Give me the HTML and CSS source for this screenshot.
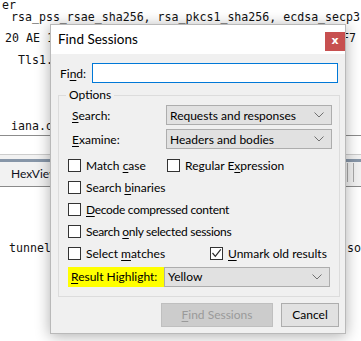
FILE: index.html
```html
<!DOCTYPE html>
<html lang="en">
<head>
  <meta charset="UTF-8">
  <title>Find Sessions</title>
  <link rel="stylesheet" href="styles.css">
</head>
<body>
  <div class="backdrop">
    <div class="code">
      <div class="ln ln-er">er</div>
      <div class="ln ln-rsa">rsa_pss_rsae_sha256, rsa_pkcs1_sha256, ecdsa_secp3</div>
      <div class="ln ln-hex"><span>20 AE 1C</span><span>F7</span></div>
      <div class="ln ln-tls">Tls1.2</div>
      <div class="ln ln-iana">iana.org</div>
    </div>
    <div class="tabs">
      <div class="tabstrip">
        <span class="tab">HexView</span>
        <span class="tab-edge"></span>
      </div>
    </div>
    <div class="ln ln-tunnel"><span>tunnel</span><span>so</span></div>
  </div>

  <div class="dialog">
    <div class="titlebar">
      <span class="title">Find Sessions</span>
      <span class="close">x</span>
    </div>

    <div class="find-row">
      <label>Fi<u>n</u>d:</label>
      <div class="textbox"></div>
    </div>

    <fieldset class="options">
      <legend>Options</legend>

      <div class="field-row">
        <label><u>S</u>earch:</label>
        <div class="select">
          <span>Requests and responses</span>
          <svg width="10" height="6" viewBox="0 0 10 6"><polyline points="0.5,0.5 5,5 9.5,0.5" fill="none" stroke="#707070" stroke-width="1"/></svg>
        </div>
      </div>
      <div class="field-row">
        <label><u>E</u>xamine:</label>
        <div class="select">
          <span>Headers and bodies</span>
          <svg width="10" height="6" viewBox="0 0 10 6"><polyline points="0.5,0.5 5,5 9.5,0.5" fill="none" stroke="#707070" stroke-width="1"/></svg>
        </div>
      </div>

      <div class="checks">
        <div class="check-row">
          <div class="check col-a"><span class="box"></span><span>Match <u>c</u>ase</span></div>
          <div class="check"><span class="box"></span><span>Regular E<u>x</u>pression</span></div>
        </div>
        <div class="check-row">
          <div class="check"><span class="box"></span><span>Search <u>b</u>inaries</span></div>
        </div>
        <div class="check-row">
          <div class="check tight"><span class="box"></span><span><u>D</u>ecode compressed content</span></div>
        </div>
        <div class="check-row">
          <div class="check tight"><span class="box"></span><span>Search <u>o</u>nly selected sessions</span></div>
        </div>
        <div class="check-row">
          <div class="check col-b"><span class="box"></span><span>Select <u>m</u>atches</span></div>
          <div class="check">
            <span class="box">
              <svg width="11" height="11" viewBox="0 0 11 11"><polyline points="1.5,5 4.3,8.3 9.8,1.3" fill="none" stroke="#2b2b2b" stroke-width="1.2"/></svg>
            </span>
            <span><u>U</u>nmark old results</span>
          </div>
        </div>
      </div>

      <div class="highlight-row">
        <label class="highlight"><u>R</u>esult Highlight:</label>
        <div class="select">
          <span>Yellow</span>
          <svg width="10" height="6" viewBox="0 0 10 6"><polyline points="0.5,0.5 5,5 9.5,0.5" fill="none" stroke="#707070" stroke-width="1"/></svg>
        </div>
      </div>
    </fieldset>

    <div class="buttons">
      <button class="btn btn-find" disabled><u>F</u>ind Sessions</button>
      <button class="btn btn-cancel">Cancel</button>
    </div>
  </div>
</body>
</html>
```

FILE: styles.css
```css
* {
  box-sizing: border-box;
  margin: 0;
  padding: 0;
}

body {
  width: 361px;
  height: 341px;
  overflow: hidden;
  position: relative;
  background: #fff;
  color: #000;
}

/* background window */

.ln {
  font-family: "DejaVu Sans Mono", monospace;
  font-size: 11.6px;
  line-height: 12px;
  height: 12px;
  white-space: pre;
  overflow-x: clip;
  color: #111;
}

.code {
  margin-top: -1px;
}

.ln-er {
  padding-left: 2px;
}

.ln-rsa {
  padding-left: 11px;
}

.ln-hex {
  display: flex;
  justify-content: space-between;
  margin-top: 9px;
  padding-left: 5px;
  padding-right: 5px;
}

.ln-tls {
  margin-top: 10px;
  padding-left: 18px;
}

.ln-iana {
  margin-top: 54px;
  padding-left: 11px;
  height: 16px;
  border-bottom: 1px solid #8c8c8c;
}

.tabs {
  margin-top: 18px;
  height: 33px;
  background: #f2f2f2;
  border-top: 1px solid #cdcdcd;
  border-bottom: 1px solid #8a8a8a;
}

.tabstrip {
  display: flex;
  align-items: center;
  margin-top: 4px;
  height: 27px;
  border-top: 3px solid #8796a8;
}

.tab {
  font-family: Lato, "Liberation Sans", sans-serif;
  font-size: 12px;
  color: #101020;
  padding-left: 11px;
  margin-top: -2px;
}

.tab-edge {
  margin-left: auto;
  margin-right: 7px;
  width: 7px;
  height: 19px;
  margin-top: -4px;
  border-left: 1px solid #a8a8a8;
  border-right: 1px solid #a8a8a8;
}

.ln-tunnel {
  display: flex;
  justify-content: space-between;
  margin-top: 55px;
  padding-left: 9px;
}

/* dialog */

.dialog {
  position: absolute;
  left: 50px;
  top: 24px;
  width: 296px;
  height: 310px;
  background: #f0f0f0;
  border: 1px solid #b9b9b9;
  box-shadow: 0 2px 14px rgba(0, 0, 0, 0.32);
  font-family: Lato, "Liberation Sans", sans-serif;
  font-size: 12px;
  color: #000;
  white-space: nowrap;
}

.dialog u {
  text-decoration: underline;
  text-underline-offset: 2px;
}

.titlebar {
  display: flex;
  justify-content: space-between;
  align-items: flex-start;
  height: 29px;
  background: #fff;
}

.title {
  font-size: 13.5px;
  padding-left: 7px;
  padding-top: 6px;
}

.close {
  width: 20px;
  height: 19px;
  margin-top: 7px;
  background: #c75050;
  color: #fff;
  font-family: "DejaVu Sans", sans-serif;
  font-weight: bold;
  font-size: 11px;
  line-height: 17px;
  text-align: center;
}

.find-row {
  display: flex;
  align-items: center;
  margin-top: 9px;
  padding-left: 9px;
}

.find-row label {
  width: 32px;
}

.textbox {
  width: 246px;
  height: 20px;
  background: #fff;
  border: 1px solid #0078d7;
}

.options {
  margin: 4px 0 0 7px;
  width: 282px;
  border: 1px solid #dcdcdc;
  padding: 2px 0 9px 9px;
}

.options legend {
  margin-left: -2px;
  padding: 0 3px;
  line-height: 16px;
}

.field-row {
  display: flex;
  align-items: center;
  height: 20px;
  margin-bottom: 4px;
}

.field-row label {
  width: 98px;
  padding-left: 4px;
}

.select {
  display: flex;
  justify-content: space-between;
  align-items: center;
  width: 166px;
  height: 20px;
  padding: 0 7px 0 3px;
  background: #e1e1e1;
  border: 1px solid #adadad;
}

.checks {
  margin-top: 6px;
}

.check-row {
  display: flex;
  align-items: center;
  height: 21.8px;
}

.check {
  display: flex;
  align-items: center;
  gap: 5px;
}

.col-a {
  width: 99px;
}

.col-b {
  width: 142px;
}

.tight {
  letter-spacing: -0.3px;
}

.box {
  display: flex;
  align-items: center;
  justify-content: center;
  width: 13px;
  height: 13px;
  background: #fff;
  border: 1px solid #333;
}

.highlight-row {
  display: flex;
  align-items: center;
  height: 20px;
  margin-top: 3px;
}

.highlight {
  width: 96px;
  height: 20px;
  line-height: 20px;
  padding-left: 3px;
  background: #ffff00;
}

.buttons {
  display: flex;
  justify-content: flex-end;
  gap: 8px;
  margin-top: 6px;
  padding-right: 6px;
}

.btn {
  height: 24px;
  font-family: Lato, "Liberation Sans", sans-serif;
  font-size: 12px;
  border: 1px solid #adadad;
  background: #e1e1e1;
  color: #000;
}

.btn-find {
  width: 112px;
  background: #cccccc;
  border-color: #bfbfbf;
  color: #9a9a9a;
}

.btn-cancel {
  width: 58px;
}
```
